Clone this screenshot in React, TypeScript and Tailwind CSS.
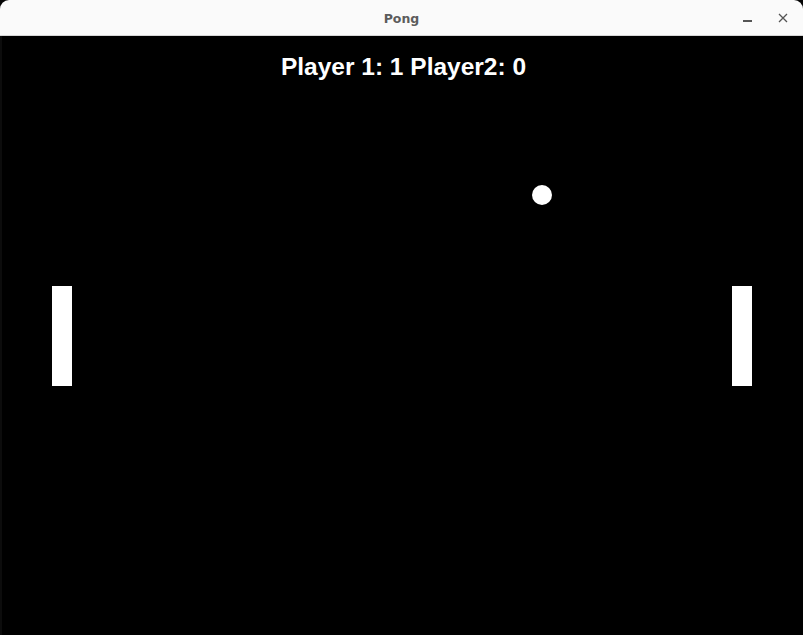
export default function App() {
  return (
    <div className="w-[803px] h-[635px] bg-[#050505] flex flex-col overflow-hidden">
      {/* title bar */}
      <div className="h-[36px] shrink-0 bg-[#fafafa] rounded-t-[9px] border-b border-[#d6d6d6] flex items-center relative">
        <div className="flex-1 pt-[3px] text-center text-[12.5px] font-bold text-[#5c5c5c] font-['DejaVu_Sans',sans-serif]">
          Pong
        </div>
        <div className="absolute right-[15px] top-0 h-full flex items-center gap-[26px]">
          <div className="w-[9px] h-[1.5px] bg-[#555] mt-[7px]" />
          <svg width="10" height="10" viewBox="0 0 10 10" className="mt-[1px]">
            <path d="M1 1 L9 9 M9 1 L1 9" stroke="#555" strokeWidth="1.3" />
          </svg>
        </div>
      </div>

      {/* game canvas */}
      <div className="flex-1 bg-black relative border-l-2 border-[#0c0c0c]">
        <div className="pt-[19px] text-center text-white text-[24.5px] leading-[24px] font-bold font-['Liberation_Sans',Arial,sans-serif] pl-[2px]">
          Player 1: 1 Player2: 0
        </div>
        <div className="absolute left-[50px] top-[250px] w-[20px] h-[100px] bg-white" />
        <div className="absolute left-[730px] top-[250px] w-[20px] h-[100px] bg-white" />
        <div className="absolute left-[530px] top-[149px] w-[20px] h-[20px] rounded-full bg-white" />
      </div>
    </div>
  );
}
